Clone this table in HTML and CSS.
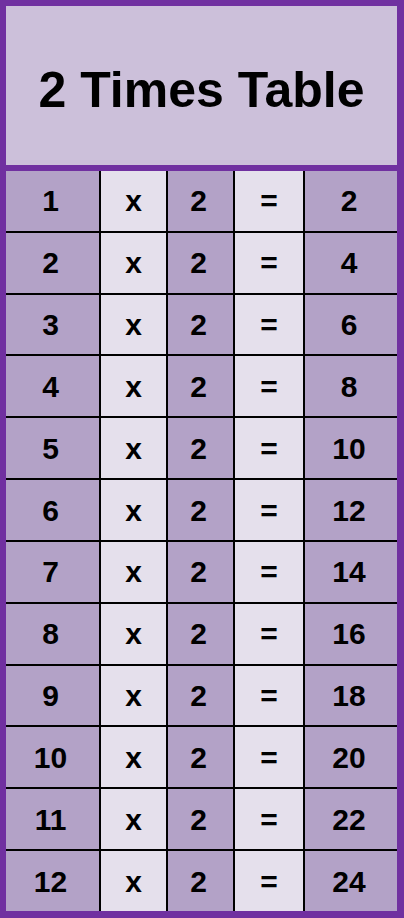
FILE: index.html
```html
<!DOCTYPE html>
<html>
<head>
<meta charset="utf-8">
<link rel="stylesheet" href="styles.css">
</head>
<body>
<div class="frame">
  <div class="title">2 Times Table</div>
  <div class="table">
    <div class="c d">1</div><div class="c l">x</div><div class="c d">2</div><div class="c l">=</div><div class="c d">2</div>
    <div class="c d">2</div><div class="c l">x</div><div class="c d">2</div><div class="c l">=</div><div class="c d">4</div>
    <div class="c d">3</div><div class="c l">x</div><div class="c d">2</div><div class="c l">=</div><div class="c d">6</div>
    <div class="c d">4</div><div class="c l">x</div><div class="c d">2</div><div class="c l">=</div><div class="c d">8</div>
    <div class="c d">5</div><div class="c l">x</div><div class="c d">2</div><div class="c l">=</div><div class="c d">10</div>
    <div class="c d">6</div><div class="c l">x</div><div class="c d">2</div><div class="c l">=</div><div class="c d">12</div>
    <div class="c d">7</div><div class="c l">x</div><div class="c d">2</div><div class="c l">=</div><div class="c d">14</div>
    <div class="c d">8</div><div class="c l">x</div><div class="c d">2</div><div class="c l">=</div><div class="c d">16</div>
    <div class="c d">9</div><div class="c l">x</div><div class="c d">2</div><div class="c l">=</div><div class="c d">18</div>
    <div class="c d">10</div><div class="c l">x</div><div class="c d">2</div><div class="c l">=</div><div class="c d">20</div>
    <div class="c d">11</div><div class="c l">x</div><div class="c d">2</div><div class="c l">=</div><div class="c d">22</div>
    <div class="c d">12</div><div class="c l">x</div><div class="c d">2</div><div class="c l">=</div><div class="c d">24</div>
  </div>
</div>
</body>
</html>
```
FILE: styles.css
```css
html, body {
  margin: 0;
  padding: 0;
}
body {
  width: 404px;
  height: 918px;
  background: #7030a0;
  font-family: "Liberation Sans", Arial, sans-serif;
  font-weight: bold;
  color: #000;
}
.frame {
  box-sizing: border-box;
  width: 404px;
  height: 918px;
  padding: 6px 7px 7px 6px;
  display: flex;
  flex-direction: column;
  gap: 6px;
  background: #7030a0;
}
.title {
  height: 159px;
  flex: none;
  background: #ccc0da;
  display: flex;
  align-items: center;
  justify-content: center;
  font-size: 50px;
  padding-top: 8px;
  box-sizing: border-box;
}
.table {
  flex: 1;
  display: grid;
  grid-template-columns: 93px 65px 65px 68px 1fr;
  grid-template-rows: repeat(12, 1fr);
  gap: 2px;
  background: #000;
}
.c {
  display: flex;
  align-items: center;
  justify-content: center;
  font-size: 30px;
  padding-top: 1px;
}
.d {
  background: #b3a2c7;
  padding-right: 4px;
}
.l {
  background: #e5e0ec;
}
```
